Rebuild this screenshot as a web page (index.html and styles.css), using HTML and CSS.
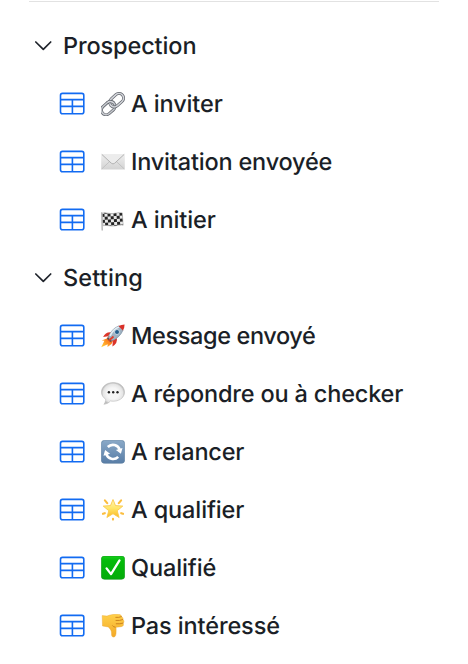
FILE: index.html
```html
<!DOCTYPE html>
<html lang="fr">
<head>
<meta charset="utf-8">
<title>Prospection</title>
<link rel="stylesheet" href="styles.css">
</head>
<body>
<svg class="defs" aria-hidden="true">
  <defs>
    <linearGradient id="paper" x1="0" y1="0" x2="0" y2="1"><stop offset="0" stop-color="#efefef"/><stop offset="1" stop-color="#d3d3d3"/></linearGradient>
    <radialGradient id="bubble"><stop offset=".5" stop-color="#f6f6f6"/><stop offset=".85" stop-color="#e5e5e5"/><stop offset="1" stop-color="#bdbdbd"/></radialGradient>
    <linearGradient id="blue" x1="0" y1="0" x2="0" y2="1"><stop offset="0" stop-color="#8aa9c8"/><stop offset="1" stop-color="#587da6"/></linearGradient>
    <linearGradient id="star" x1="0" y1="0" x2="0" y2="1"><stop offset="0" stop-color="#fff6b8"/><stop offset=".5" stop-color="#ffe566"/><stop offset="1" stop-color="#fbb823"/></linearGradient>
    <linearGradient id="green" x1="0" y1="0" x2="0" y2="1"><stop offset="0" stop-color="#16cf1c"/><stop offset=".2" stop-color="#04bb0a"/><stop offset="1" stop-color="#05ac0a"/></linearGradient>
    <linearGradient id="skin" x1="0" y1="0" x2="0" y2="1"><stop offset="0" stop-color="#ffd04a"/><stop offset="1" stop-color="#f3a928"/></linearGradient>
    <linearGradient id="flame" x1="1" y1="0" x2="0" y2="1"><stop offset="0" stop-color="#ed3d22"/><stop offset=".5" stop-color="#ff8a20"/><stop offset="1" stop-color="#ffd83e"/></linearGradient>
    <pattern id="checks" width="6" height="6" patternUnits="userSpaceOnUse" patternTransform="rotate(-4)"><path fill="#e8e8e8" d="M0 0h6v6H0z"/><path fill="#242424" d="M0 0h3v3H0zM3 3h3v3H3z"/></pattern>
    <symbol id="table" viewBox="0 0 26 24"><g fill="none" stroke="#126bf2" stroke-width="1.6"><rect x="1.5" y="1.4" width="23.3" height="20.4" rx="2"/><path d="M1.5 7.6h23.3M1.5 14.4h23.3M13.4 7.6v14.2"/></g></symbol>
    <symbol id="chevron" viewBox="0 0 18 12"><path d="M1.8 2 9.3 9.4l7.4-7.4" fill="none" stroke="#1f232b" stroke-width="1.7" stroke-linecap="round" stroke-linejoin="round"/></symbol>
  </defs>
</svg>
<nav class="tree">
  <div class="row group"><svg class="chevron"><use href="#chevron"/></svg><span>Prospection</span></div>
  <div class="row item"><svg class="table"><use href="#table"/></svg>
    <svg class="emoji" viewBox="0 0 24 24"><g fill="none" transform="rotate(-42 12 12)"><rect x="-1.8" y="7.2" width="15" height="9.4" rx="4.7" stroke="#62666d" stroke-width="3"/><rect x="-1.8" y="7.2" width="15" height="9.4" rx="4.7" stroke="#c5c8cd" stroke-width="1.6"/><rect x="9.5" y="7" width="15.5" height="9.2" rx="4.6" stroke="#62666d" stroke-width="3"/><rect x="9.5" y="7" width="15.5" height="9.2" rx="4.6" stroke="#d2d4d9" stroke-width="1.6"/><path d="M8.5 7.2a4.7 4.7 0 0 1 4.7 4.7" stroke="#62666d" stroke-width="3"/><path d="M8.5 7.2a4.7 4.7 0 0 1 4.7 4.7" stroke="#d2d4d9" stroke-width="1.6"/></g></svg><span>A inviter</span></div>
  <div class="row item"><svg class="table"><use href="#table"/></svg>
    <svg class="emoji" viewBox="0 0 24 24"><rect x=".2" y="3.9" width="23.6" height="15.6" rx=".6" fill="url(#paper)"/><path d="m.8 18.9 8.6-8.1M23.2 18.9l-8.6-8.1" fill="none" stroke="#bdbdbd" stroke-width=".8"/><path d="m.8 4.4 9.5 8.8q1.7 1.5 3.4 0l9.5-8.8" fill="#ececec" stroke="#aaa" stroke-width=".9"/></svg><span class="invitation">Invitation envoyée</span></div>
  <div class="row item"><svg class="table"><use href="#table"/></svg>
    <svg class="emoji" viewBox="0 0 24 24"><path d="M1.3 5c4-1 7 1.1 11 .5 3-.5 6-1 9-.6l.9 12.3c-3-.6-6 .4-9 .8-4 .6-7-1.3-11.3-.2z" fill="url(#checks)" stroke="#858585" stroke-width=".4"/><path d="m.7 4.3.5 18.2" stroke="#aaa" stroke-width="1.2"/></svg><span>A initier</span></div>
  <div class="row group"><svg class="chevron"><use href="#chevron"/></svg><span class="setting">Setting</span></div>
  <div class="row item"><svg class="table"><use href="#table"/></svg>
    <svg class="emoji" viewBox="0 0 24 24"><path d="M7.3 12 5.8 14.5.7 16.5l2.7.3L.2 23.3l6.5-3.1-.2 2.9 4-3.2 1.7-3.5z" fill="url(#flame)"/><path d="M10 8.2Q4.5 7.7 2.1 13l5.1-.8zm5.8 5.7q1.2 5-4.4 8.6l.5-6z" fill="#dc3429"/><path d="M7 14Q10 4.8 18 1.8l4.2 4.1Q18.8 14 10 17z" fill="#9fb2c2" stroke="#647c91" stroke-width=".5"/><path d="M9 11.8Q12 5.3 18 3" fill="none" stroke="#e3edf3" stroke-width="1.7"/><path d="M17.5 2Q20.5.4 23.6.4q0 3.2-1.7 6z" fill="#d93129"/><circle cx="16" cy="8" r="2.5" fill="#245f8d" stroke="#dce6ed" stroke-width=".8"/><path d="m7.2 13.5 3.6 3.4-1.5 1.2-3.4-3.3z" fill="#54535a"/><path d="m8 16.5 4.5-4" stroke="#e33c29" stroke-width="1.7"/></svg><span class="message">Message envoyé</span></div>
  <div class="row item"><svg class="table"><use href="#table"/></svg>
    <svg class="emoji" viewBox="0 0 24 24"><path d="M12.2.6C5.7.6.5 4.7.5 10.1c0 3 1.6 5.5 4.2 7.1.1 2.1-.7 3.8-1.8 5.1 2.9-.4 5.1-1.6 6.5-3.3 8 1.3 14.1-3 14.1-8.9C23.5 4.7 18.7.6 12.2.6z" fill="url(#bubble)" stroke="#b8b8b8" stroke-width=".6"/><g fill="#222"><circle cx="7.9" cy="10.2" r="1.2"/><circle cx="12.2" cy="10.2" r="1.2"/><circle cx="16.5" cy="10.2" r="1.2"/></g></svg><span class="reply">A répondre ou à checker</span></div>
  <div class="row item"><svg class="table"><use href="#table"/></svg>
    <svg class="emoji" viewBox="0 0 24 24"><rect x=".3" y=".3" width="23.4" height="23" rx="3.4" fill="url(#blue)" stroke="#5e7f9f" stroke-width=".6"/><g fill="none" stroke="#fff" stroke-width="2.6"><path d="M6.8 7A7.2 7.2 0 0 1 18.8 10"/><path d="M17.2 16.8A7.2 7.2 0 0 1 5.2 13.8"/></g><path d="m21.5 8.1-1.6 5.6-5-3.6zM2.5 15.7l1.6-5.6 5 3.6z" fill="#fff"/></svg><span class="relaunch">A relancer</span></div>
  <div class="row item"><svg class="table"><use href="#table"/></svg>
    <svg class="emoji" viewBox="0 0 24 24"><path d="m3.9 2.3 2.3 2.8M20.1 2.3l-2.3 2.8M2 15.8l1.8-.6m18.2.6-1.8-.6M12 21.6v-.9" stroke="#fbbd3e" stroke-width="2.1" stroke-linecap="round"/><path d="m12 1.5 2.5 6.1 7.3.5-5.6 4.6 1.9 6.8-6.1-3.8-6.1 3.8 1.9-6.8-5.6-4.6 7.3-.5z" fill="url(#star)" stroke="#fac94c" stroke-width=".9" stroke-linejoin="round"/></svg><span>A qualifier</span></div>
  <div class="row item"><svg class="table"><use href="#table"/></svg>
    <svg class="emoji" viewBox="0 0 24 24"><rect x=".3" y=".1" width="23.4" height="23.2" rx="3.2" fill="url(#green)" stroke="#14951b" stroke-width=".6"/><path d="m5.6 12.4 4.4 5.7L18.5 4.4" fill="none" stroke="#fff" stroke-width="2.3" stroke-linecap="round" stroke-linejoin="round"/></svg><span>Qualifié</span></div>
  <div class="row item"><svg class="table"><use href="#table"/></svg>
    <svg class="emoji" viewBox="0 0 24 24"><path d="M1.2 1.6 6 2.1C8.8.8 12 .2 16.5.2c2.6 0 4 .8 3.9 2.5 1.5.4 1.9 1.8 1.4 2.9 1.5.8 1.5 2.7.3 3.5.9 1.8.2 3.4-2 3.6l-5 .6v4.2c.1 3.4-.6 5.6-2.6 5.6-1.6 0-2.1-1.5-2-4.1.1-2-1.1-4.3-3.3-6.1L1.5 12z" fill="url(#skin)" stroke="#e8a12c" stroke-width=".4"/><path d="M14.8 3.4q3 .3 5.6-.7M15 6.5q3.7.4 6.8-.9M15.2 9.8q4 .4 6.9-.7M14.2 13.2q-1.8 0-2.6-1.4" fill="none" stroke="#c77c19" stroke-width=".9" stroke-linecap="round"/></svg><span>Pas intéressé</span></div>
</nav>
</body>
</html>
```
FILE: styles.css
```css
body {
  margin: 0;
  background: #fff;
  color: #1b1f27;
  font: 500 23.5px/58px Inter, sans-serif;
  letter-spacing: -0.12px;
  text-rendering: geometricPrecision;
}

.defs {
  position: absolute;
  width: 0;
  height: 0;
}

.tree {
  height: 663px;
  margin: 1px 29px 0;
  box-sizing: border-box;
  padding-top: 15px;
  border-top: 1px solid #e2e2e2;
  overflow: hidden;
}

.row {
  display: flex;
  align-items: center;
  height: 58px;
  white-space: nowrap;
}

.group { padding-left: 5px; }
.item { padding-left: 30px; }

.invitation { letter-spacing: -0.19px; }
.message { letter-spacing: -0.38px; }
.reply { letter-spacing: -0.18px; }
.relaunch { letter-spacing: -0.2px; }
.setting { letter-spacing: 0.15px; }

.chevron {
  width: 18px;
  height: 12px;
  margin-right: 11px;
}

.table {
  width: 26px;
  height: 24px;
  margin-right: 16px;
}

.emoji {
  width: 24px;
  height: 24px;
  margin-right: 6px;
}
```
